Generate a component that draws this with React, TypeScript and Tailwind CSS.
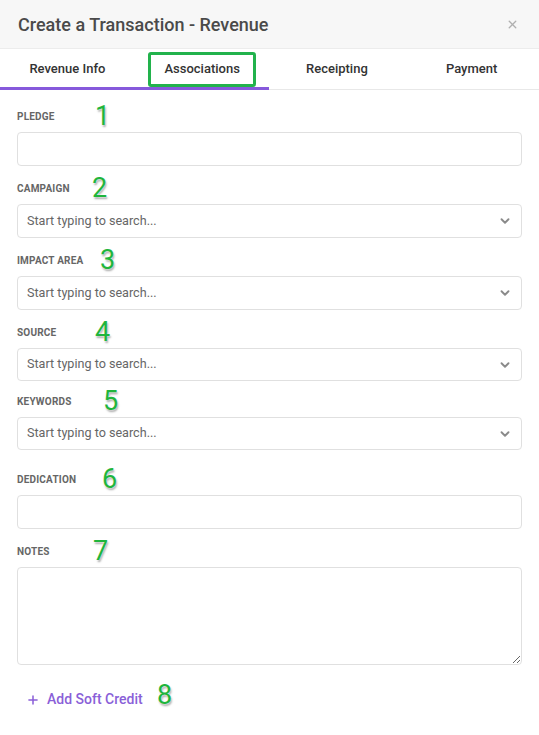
import { ChevronDown, Plus, X } from "lucide-react";

const tabs = ["Revenue Info", "Associations", "Receipting", "Payment"];

const markerCls =
  "absolute text-[27px] font-normal leading-[30px] text-[#1fb53c] [text-shadow:0_0_2px_#fff,1px_2px_2px_rgba(0,0,0,0.35)]";

function Label({ text, n, left }: { text: string; n: number; left: number }) {
  return (
    <div className="relative mb-2 text-[10px] font-bold leading-[14px] tracking-[0.02em] text-[#666]">
      {text}
      <span className={`${markerCls} -top-[9px]`} style={{ left }}>
        {n}
      </span>
    </div>
  );
}

function SearchSelect({ h = "h-[34px]" }: { h?: string }) {
  return (
    <div
      className={`flex ${h} items-center justify-between rounded border border-[#e0e0e0] bg-white pl-[9px] pr-[9px]`}
    >
      <span className="text-[12.6px] text-[#666]">Start typing to search...</span>
      <ChevronDown size={14} strokeWidth={3.2} className="text-[#8a8a8a]" />
    </div>
  );
}

export default function App() {
  return (
    <div className="h-[735px] w-[539px] bg-white font-['Roboto',sans-serif] text-[#333]">
      <div className="flex h-[49px] items-center justify-between border-b border-[#ececec] bg-[#f7f7f7] pl-[18px] pr-[20px]">
        <h2 className="text-[18px] font-medium text-[#4a4a4a]">
          Create a Transaction - Revenue
        </h2>
        <X size={13} strokeWidth={2.5} className="text-[#b0b0b0]" />
      </div>

      <div className="relative grid h-[41px] grid-cols-4 border-b border-[#e8e8e8]">
        {tabs.map((t) => (
          <div
            key={t}
            className="flex items-center justify-center text-[13px] font-medium text-[#333]"
          >
            {t === "Associations" ? (
              <span className="flex h-[35px] w-[108px] items-center justify-center rounded-[3px] border-[3px] border-[#22b24c] bg-white">
                {t}
              </span>
            ) : (
              t
            )}
          </div>
        ))}
        <div className="absolute bottom-[-1px] left-0 h-[3px] w-[269px] bg-[#8659db]" />
      </div>

      <div className="px-[17px] pt-[20px]">
        <Label text="PLEDGE" n={1} left={78} />
        <div className="h-[34px] rounded border border-[#e0e0e0]" />

        <div className="mt-4">
          <Label text="CAMPAIGN" n={2} left={75} />
          <SearchSelect />
        </div>

        <div className="mt-4">
          <Label text="IMPACT AREA" n={3} left={83} />
          <SearchSelect />
        </div>

        <div className="mt-4">
          <Label text="SOURCE" n={4} left={78} />
          <SearchSelect h="h-[33px]" />
        </div>

        <div className="mt-[14px]">
          <Label text="KEYWORDS" n={5} left={86} />
          <SearchSelect h="h-[33px]" />
        </div>

        <div className="mt-[23px]">
          <Label text="DEDICATION" n={6} left={85} />
          <div className="h-[34px] rounded border border-[#e0e0e0]" />
        </div>

        <div className="mt-4">
          <Label text="NOTES" n={7} left={76} />
          <textarea className="block h-[98px] w-full resize-y rounded border border-[#e0e0e0] outline-none" />
        </div>

        <div className="relative mt-[24px] flex items-center gap-[7px] pl-[9px] text-[14px] font-medium text-[#8a5fd8]">
          <Plus size={14} strokeWidth={2.6} className="text-[#8a5fd8]" />
          <span>Add Soft Credit</span>
          <span className={`${markerCls} left-[140px] top-[-9px]`}>8</span>
        </div>
      </div>
    </div>
  );
}
